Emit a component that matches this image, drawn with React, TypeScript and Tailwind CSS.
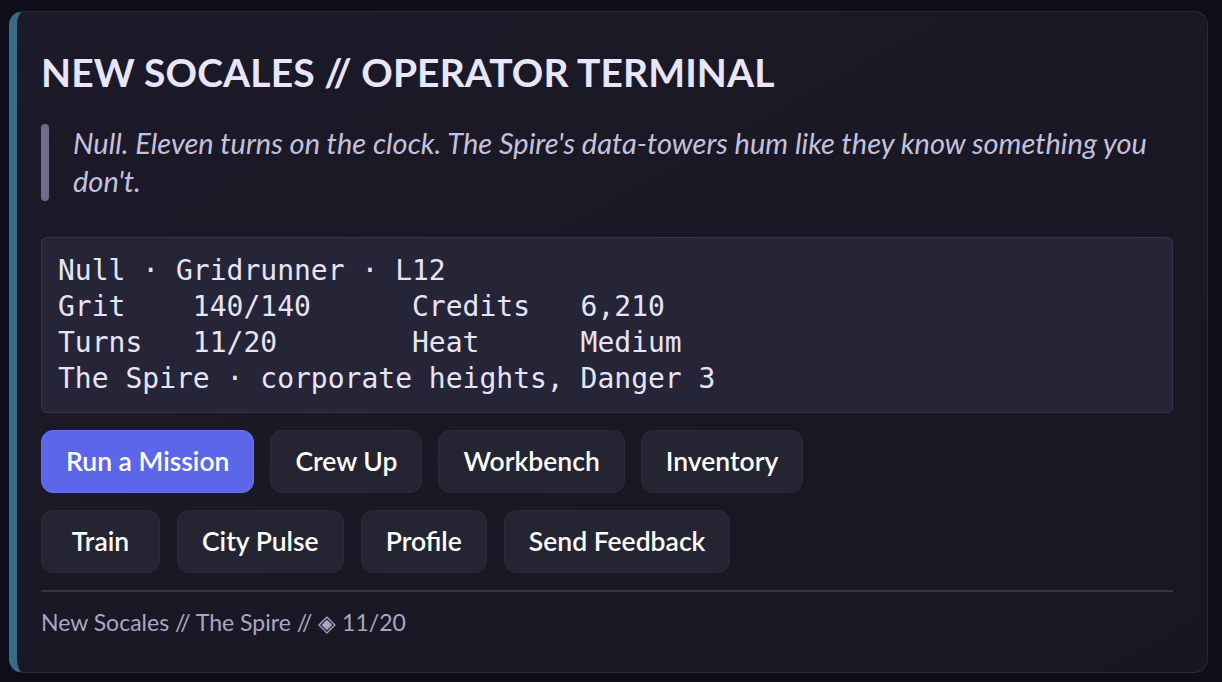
import React from "react";

const primaryActions = ["Run a Mission", "Crew Up", "Workbench", "Inventory"];
const secondaryActions = ["Train", "City Pulse", "Profile", "Send Feedback"];

const statLines = [
    "Null · Gridrunner · L12",
    "Grit    140/140      Credits   6,210",
    "Turns   11/20        Heat      Medium",
    "The Spire · corporate heights, Danger 3",
];

function ActionButton({ label, primary }: { label: string; primary?: boolean }) {
    return (
        <button
            type="button"
            className={
                primary
                    ? "h-[63px] min-w-[119px] px-6 rounded-xl border border-[#6a74f0] bg-[#5b67e8] text-[26.5px] font-semibold text-white"
                    : "h-[63px] min-w-[119px] px-6 rounded-xl border border-[#2b2a39] bg-[#252432] text-[26.5px] font-semibold text-white"
            }
        >
            {label}
        </button>
    );
}

export default function App() {
    return (
        <div className="min-h-[682px] w-full bg-[#0f0d19] pt-[11px] pl-[9px] pr-[14px] pb-[9px] font-['Lato',sans-serif]">
            <div className="h-[662px] rounded-[14px] border border-[#2a2837] border-l-[8px] border-l-[#3a6b84] bg-gradient-to-br from-[#1c1a28] to-[#181621] pl-6 pr-[34px] pt-[37px]">
                {/* 헤더 */}
                <h1 className="text-[39px] leading-[46px] font-bold tracking-[0.1px] text-[#e8e6ff]">
                    NEW SOCALES // OPERATOR TERMINAL
                </h1>

                {/* 인용 블록 */}
                <div className="mt-[29px] flex gap-[24px]">
                    <div className="w-[8px] shrink-0 rounded-full bg-[#6f6b8b]" />
                    <p className="text-[29px] leading-[38px] italic text-[#c4c1de] pb-[1px]">
                        Null. Eleven turns on the clock. The Spire's data-towers hum like they know something you don't.
                    </p>
                </div>

                {/* 스탯 박스 */}
                <div className="mt-[36px] rounded-md border border-[#36344a] bg-[#262537] px-4 py-[15px] font-['DejaVu_Sans_Mono',monospace] text-[28px] leading-[36px] text-[#e6e4f6]">
                    {statLines.map((line) => (
                        <div key={line} className="whitespace-pre">
                            {line}
                        </div>
                    ))}
                </div>

                {/* 액션 버튼 */}
                <div className="mt-[17px] flex flex-col gap-[17px]">
                    <div className="flex gap-[16px]">
                        {primaryActions.map((label, i) => (
                            <ActionButton key={label} label={label} primary={i === 0} />
                        ))}
                    </div>
                    <div className="flex gap-[17px]">
                        {secondaryActions.map((label) => (
                            <ActionButton key={label} label={label} />
                        ))}
                    </div>
                </div>

                <div className="mt-[17px] h-[2px] bg-[#363444]" />

                <p className="mt-[13px] text-[23px] text-[#a9a6c3]">New Socales // The Spire // ◈ 11/20</p>
            </div>
        </div>
    );
}
